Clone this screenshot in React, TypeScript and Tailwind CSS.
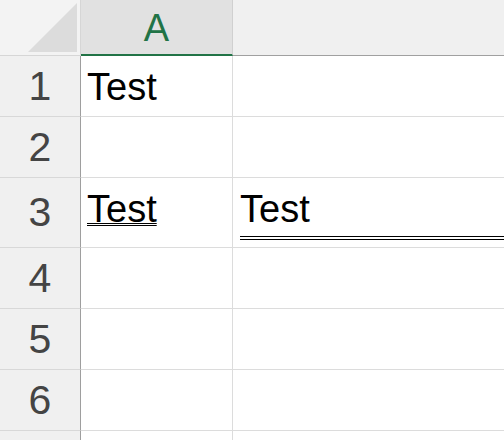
const rows = [
  { n: 1, h: "h-[61px]" },
  { n: 2, h: "h-[61px]" },
  { n: 3, h: "h-[70px]" },
  { n: 4, h: "h-[61px]" },
  { n: 5, h: "h-[61px]" },
  { n: 6, h: "h-[61px]" },
  { n: 7, h: "h-[61px]" },
];

function CellA({ n }: { n: number }) {
  if (n === 1) {
    return <span className="pb-[7px] pl-[6px] leading-[44px] text-black">Test</span>;
  }
  if (n === 3) {
    return (
      <span className="pb-[16px] pl-[6px] leading-[44px] text-black underline decoration-double decoration-1">
        Test
      </span>
    );
  }
  return null;
}

function CellB({ n }: { n: number }) {
  if (n !== 3) return null;
  return (
    <div className="flex-1 ml-[7px] mb-[7px] pb-[5px] border-b-4 border-double border-black leading-[44px] text-black">
      Test
    </div>
  );
}

export default function App() {
  return (
    <div className="w-[504px] h-[440px] overflow-hidden bg-white font-['Liberation_Sans',Arial,sans-serif] text-[38px]">
      {/* Column headers */}
      <div className="flex h-[56px]">
        <div className="w-[81px] shrink-0 bg-[#f3f3f3] border-r border-b border-[#d6d6d6]">
          <svg width="80" height="55" viewBox="0 0 80 55">
            <polygon points="28,52 77,52 77,3" fill="#dcdcdc" />
          </svg>
        </div>
        <div className="w-[152px] shrink-0 flex items-center justify-center bg-[#e1e1e1] border-r border-r-[#d0d0d0] border-b-2 border-b-[#217346] text-[#217346] leading-none pt-[2px]">
          A
        </div>
        <div className="flex-1 bg-[#f0f0f0] border-b border-[#a0a0a0]" />
      </div>

      {/* Rows */}
      {rows.map((r) => (
        <div key={r.n} className={`flex ${r.h}`}>
          <div className="w-[81px] shrink-0 flex items-center justify-center bg-[#f0f0f0] border-r border-r-[#9e9e9e] border-b border-b-[#d8d8d8] text-[#444] text-[41px] leading-none">
            {r.n < 7 ? r.n : null}
          </div>
          <div className="w-[152px] shrink-0 flex items-end border-r border-b border-[#dcdcdc]">
            <CellA n={r.n} />
          </div>
          <div className="flex-1 flex items-end border-b border-[#dcdcdc]">
            <CellB n={r.n} />
          </div>
        </div>
      ))}
    </div>
  );
}
